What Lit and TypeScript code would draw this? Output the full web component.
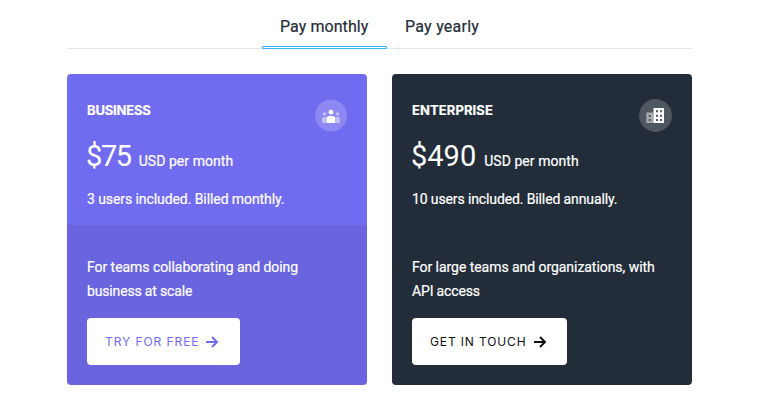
import { LitElement, html, css, svg } from "lit";
import { customElement, property } from "lit/decorators.js";

interface Plan {
  theme: string;
  name: string;
  price: string;
  included: string;
  pitch: string[];
  action: string;
}

const plans: Plan[] = [
  {
    theme: "business",
    name: "BUSINESS",
    price: "$75",
    included: "3 users included. Billed monthly.",
    pitch: ["For teams collaborating and doing", "business at scale"],
    action: "TRY FOR FREE",
  },
  {
    theme: "enterprise",
    name: "ENTERPRISE",
    price: "$490",
    included: "10 users included. Billed annually.",
    pitch: ["For large teams and organizations, with", "API access"],
    action: "GET IN TOUCH",
  },
];

const people = svg`
  <circle class="disc" cx="17" cy="16.5" r="16"/>
  <g fill="#fff" fill-opacity="0.45">
    <circle cx="10.5" cy="15" r="1.8"/><circle cx="23.5" cy="15" r="1.8"/>
    <path d="M8 24v-4q0-2 2-2h3v6zM21 18h3q2 0 2 2v4h-5z"/>
  </g>
  <circle cx="17" cy="13.2" r="2.4" fill="#fff"/>
  <path d="M13 24v-5q0-2 2-2h4q2 0 2 2v5z" fill="#fff"/>`;

const buildings = svg`
  <circle class="disc" cx="16.5" cy="16.5" r="16.4"/>
  <path fill="#fff" fill-opacity="0.5" fill-rule="evenodd" d="M7.3 13.5h7.2V24H7.3zM9.8 16v2h2v-2zM9.8 20v2h2v-2z"/>
  <path fill="#fff" fill-rule="evenodd" d="M14.5 9H25v15H14.5zM17 11.2v2h2v-2zM21 11.2v2h2v-2zM17 15.8v2h2v-2zM21 15.8v2h2v-2zM17 20v2h2v-2zM21 20v2h2v-2z"/>`;

@customElement("plan-card")
class PlanCard extends LitElement {
  @property({ attribute: false }) plan!: Plan;

  static styles = css`
    :host { display: block; }
    .card { height: 311px; border-radius: 4px; overflow: hidden; color: #fff; font: 14px/24px Roboto, sans-serif; letter-spacing: -0.08px; -webkit-text-stroke: 0.2px currentColor; white-space: nowrap; }
    .top { box-sizing: border-box; height: 151px; padding: 24px 20px 0; display: flex; flex-direction: column; }
    .bottom { box-sizing: border-box; height: 160px; padding: 30px 20px 0; }
    .business .top { background: #716bf0; }
    .business .bottom { background: #6a65df; }
    .enterprise { background: #232d39; }
    .head { display: flex; justify-content: space-between; height: 34px; }
    .name { font: 700 13px/24px Inter, sans-serif; letter-spacing: -0.2px; }
    .enterprise .name { letter-spacing: 0.1px; }
    .badge { width: 33px; height: 33px; margin-top: 1px; }
    .badge .disc { fill: #fff; fill-opacity: 0.2; }
    .price { display: flex; align-items: baseline; height: 40px; gap: 8px; margin: 4px 0 0 -1px; }
    .amount { font: 29px/40px Roboto, sans-serif; letter-spacing: 0; -webkit-text-stroke: 0; }
    .business .amount { letter-spacing: -1.4px; }
    .unit { letter-spacing: 0.05px; }
    .included { margin-top: 11px; }
    .enterprise .included { letter-spacing: -0.12px; }
    .pitch { letter-spacing: -0.05px; }
    .business .pitch + .pitch, .enterprise .pitch + .pitch { letter-spacing: -0.16px; }
    .action { display: flex; align-items: center; box-sizing: border-box; width: 153px; height: 47px; margin-top: 15px; padding: 0 18px; gap: 6px; border: 0; border-radius: 4px; background: #fff; color: #716bf0; font: 12px/16px Inter, sans-serif; letter-spacing: 0.93px; -webkit-text-stroke: 0; }
    .enterprise .action { width: 155px; color: #111; letter-spacing: 0.87px; }
    .arrow { width: 14px; height: 14px; flex: none; fill: none; stroke: currentColor; stroke-width: 2; }
  `;

  render() {
    const p = this.plan;
    return html`
      <section class="card ${p.theme}">
        <div class="top">
          <div class="head">
            <span class="name">${p.name}</span>
            <svg class="badge" viewBox="0 0 33 33">${p.theme === "business" ? people : buildings}</svg>
          </div>
          <div class="price"><span class="amount">${p.price}</span><span class="unit">USD per month</span></div>
          <div class="included"><span>${p.included}</span></div>
        </div>
        <div class="bottom">
          ${p.pitch.map((line) => html`<div class="pitch"><span>${line}</span></div>`)}
          <button class="action"><span>${p.action}</span>
            <svg class="arrow" viewBox="0 0 14 14"><path d="M1 7h11M7 2l5 5-5 5"/></svg>
          </button>
        </div>
      </section>`;
  }
}

@customElement("app-root")
class AppRoot extends LitElement {
  static styles = css`
    :host { display: block; box-sizing: border-box; height: 409px; padding-left: 67px; background: #fff; }
    .tabs { display: flex; box-sizing: border-box; width: 625px; height: 49px; padding: 5px 0 0 195px; border-bottom: 1px solid #dce8f0; font: 16px/44px Roboto, sans-serif; letter-spacing: 0.25px; -webkit-text-stroke: 0.2px currentColor; color: #242d39; white-space: nowrap; }
    .tab { position: relative; box-sizing: border-box; height: 44px; padding: 0 18px; }
    .tab.active { width: 125px; letter-spacing: 0.07px; }
    .tab.active::after { content: ""; position: absolute; left: 0; right: 0; bottom: 0; height: 3px; box-sizing: border-box; border: 1px solid #36b3fb; border-radius: 1px; background: #fff; }
    .cards { display: grid; grid-template-columns: 300px 300px; gap: 25px; margin-top: 25px; }
  `;

  render() {
    return html`
      <nav class="tabs"><span class="tab active">Pay monthly</span><span class="tab">Pay yearly</span></nav>
      <main class="cards">${plans.map((p) => html`<plan-card .plan=${p}></plan-card>`)}</main>`;
  }
}
